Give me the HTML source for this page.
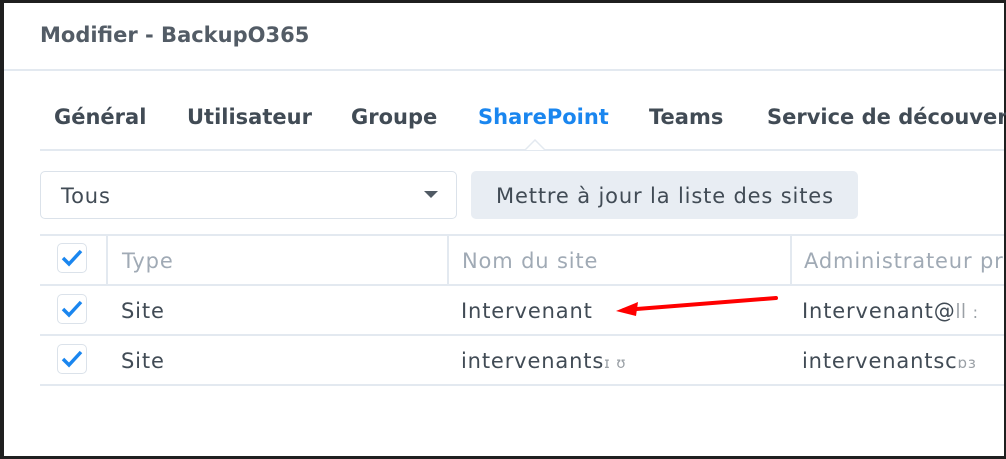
<!DOCTYPE html>
<html><head><meta charset="utf-8"><style>
*{margin:0;padding:0;box-sizing:border-box}
body{width:1006px;height:459px;background:#1f1f1f;position:relative;overflow:hidden;font-family:"Liberation Sans","DejaVu Sans",sans-serif}
#w{position:absolute;left:4px;top:3px;width:1000px;height:453px;background:#fff}
.a{position:absolute;white-space:nowrap}
.t{font-family:"DejaVu Sans",sans-serif;font-weight:bold;color:#414b55;font-size:21px}
.hl{position:absolute;height:2px;background:#e3e9f0}
.cb{position:absolute;left:53px;width:30px;height:30px;border:1.5px solid #dbe2ea;border-radius:5px;background:#fff}
.cb svg{position:absolute;left:3px;top:4px}
.r{font-family:"DejaVu Sans",sans-serif;font-size:21px;letter-spacing:0.85px;color:#414b55}
.h{color:#a0aab5}
</style></head><body><div id="w">
<div class="a t" style="left:36px;top:20px;color:#535c66">Modifier - BackupO365</div>
<div class="hl" style="left:0;top:66px;width:1000px"></div>
<div class="a t" style="left:50px;top:102px">Général</div>
<div class="a t" style="left:183px;top:102px">Utilisateur</div>
<div class="a t" style="left:347px;top:102px">Groupe</div>
<div class="a t" style="left:474px;top:102px;color:#1a86ef">SharePoint</div>
<div class="a t" style="left:645px;top:102px">Teams</div>
<div class="a t" style="left:763px;top:102px">Service de découverte</div>
<div class="hl" style="left:36px;top:146px;width:964px"></div>
<svg class="a" style="left:521px;top:136px" width="20" height="12"><path d="M0 11 L10 1 L20 11" fill="#fff" stroke="#e3e9f0" stroke-width="1.5"/></svg>
<div class="a" style="left:36px;top:168px;width:417px;height:48px;border:1.5px solid #dbe2ea;border-radius:5px"></div>
<div class="a r" style="left:57px;top:181px">Tous</div>
<svg class="a" style="left:420px;top:188px" width="14" height="8"><path d="M0 0H14L7 7Z" fill="#505a64"/></svg>
<div class="a" style="left:467px;top:168px;width:387px;height:48px;background:#e8edf3;border-radius:5px"></div>
<div class="a r" style="left:492px;top:181px">Mettre à jour la liste des sites</div>
<div class="hl" style="left:36px;top:231px;width:964px"></div>
<div class="hl" style="left:36px;top:281px;width:964px"></div>
<div class="hl" style="left:36px;top:331px;width:964px"></div>
<div class="hl" style="left:36px;top:381px;width:964px"></div>
<div class="a" style="left:102px;top:232px;width:1.5px;height:49px;background:#e3e9f0"></div>
<div class="a" style="left:443px;top:232px;width:1.5px;height:49px;background:#e3e9f0"></div>
<div class="a" style="left:786px;top:232px;width:1.5px;height:49px;background:#e3e9f0"></div>
<div class="cb" style="top:240px"><svg width="22" height="20"><path d="M2 10 L8 16 L20 3" fill="none" stroke="#1a86ef" stroke-width="3.5"/></svg></div>
<div class="cb" style="top:291px"><svg width="22" height="20"><path d="M2 10 L8 16 L20 3" fill="none" stroke="#1a86ef" stroke-width="3.5"/></svg></div>
<div class="cb" style="top:341px"><svg width="22" height="20"><path d="M2 10 L8 16 L20 3" fill="none" stroke="#1a86ef" stroke-width="3.5"/></svg></div>
<div class="a r h" style="left:118px;top:246px">Type</div>
<div class="a r h" style="left:458px;top:246px">Nom du site</div>
<div class="a r h" style="left:800px;top:246px">Administrateur pr</div>
<div class="a r" style="left:117px;top:296px">Site</div>
<div class="a r" style="left:457px;top:296px">Intervenant</div>
<div class="a r" style="left:798px;top:296px">Intervenant@<span style="color:#9aa0a6;font-size:16px">ꟾꟾ ꞉</span></div>
<div class="a r" style="left:117px;top:346px">Site</div>
<div class="a r" style="left:457px;top:346px">intervenants<span style="color:#9aa0a6;font-size:15px">ɪ ʊ</span></div>
<div class="a r" style="left:798px;top:346px">intervenantsc<span style="color:#9aa0a6;font-size:15px">ɒɜ</span></div>
<svg class="a" style="left:610px;top:290px" width="165" height="24"><path d="M10 17 L162 5" stroke="#f00" stroke-width="4" stroke-linecap="round"/><path d="M2 18 L24 9 L22 23 Z" fill="#f00"/></svg>
</div></body></html>
